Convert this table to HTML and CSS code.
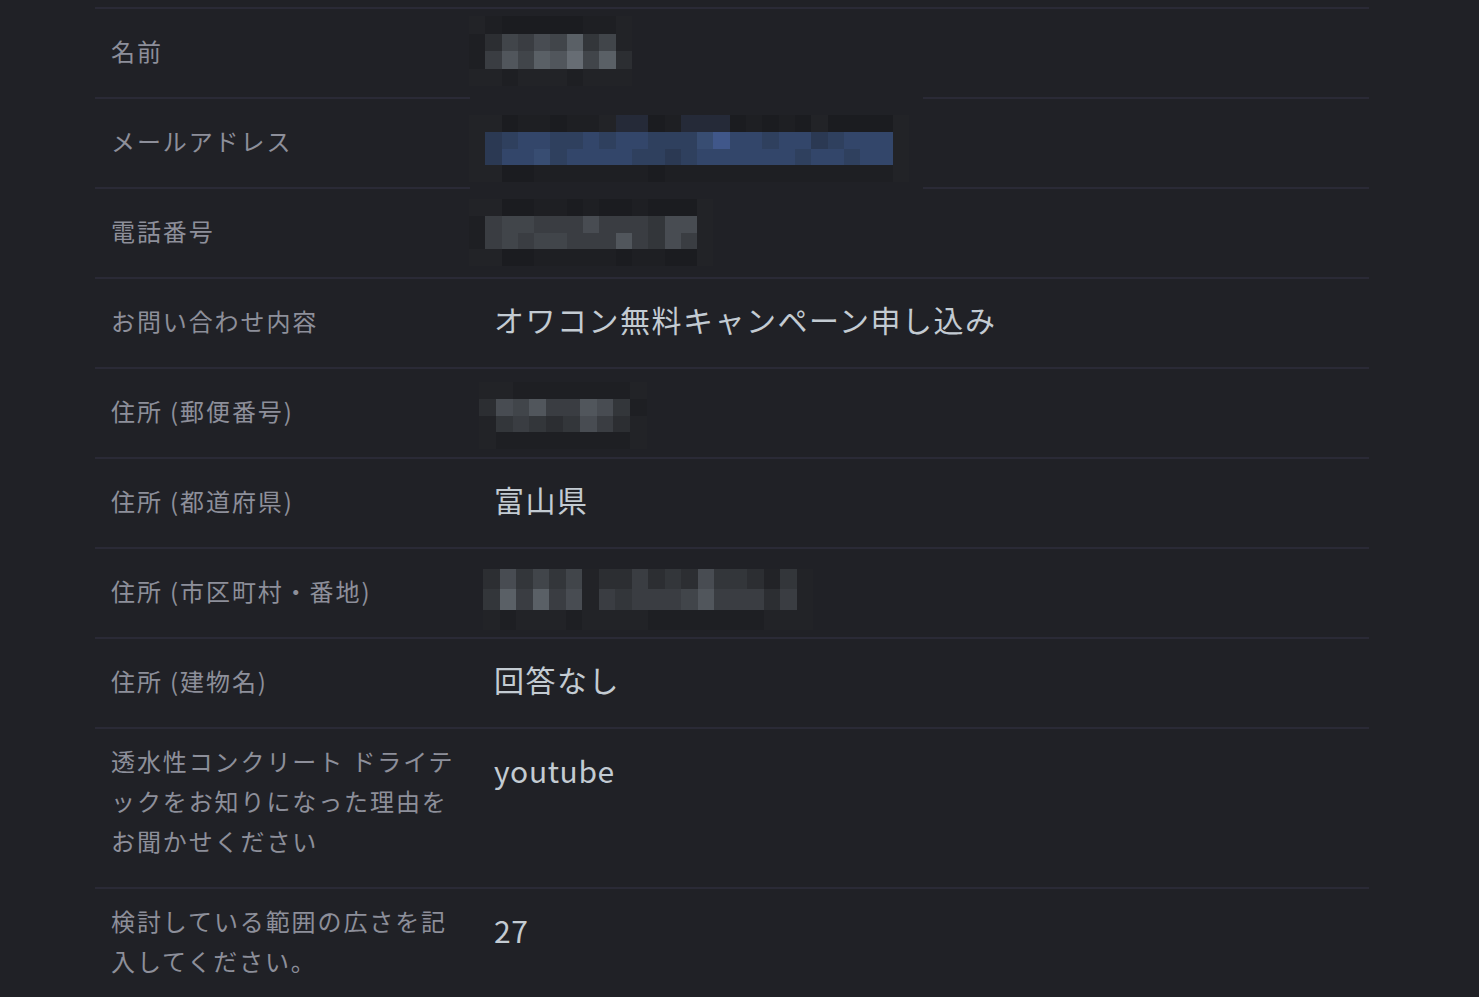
FILE: index.html
```html
<!DOCTYPE html>
<html lang="ja">
<head>
<meta charset="utf-8">
<title>お問い合わせ内容</title>
<link rel="stylesheet" href="styles.css">
</head>
<body>
<div class="table">
  <div class="row">
    <div class="label">名前</div>
    <div class="value"></div>
    <div class="mosaic m-name">
      <i class="h2"></i><i class="h1"></i><i class="h0"></i><i class="h0"></i><i class="h0"></i><i class="h0"></i><i class="h0"></i><i class="h1"></i><i class="h1"></i><i class="h2"></i>
      <i class="h1"></i><i class="g1"></i><i class="g4"></i><i class="g3"></i><i class="g5"></i><i class="g4"></i><i class="g7"></i><i class="g2"></i><i class="g4"></i><i class="h2"></i>
      <i class="h1"></i><i class="g3"></i><i class="g6"></i><i class="g4"></i><i class="g7"></i><i class="g6"></i><i class="g8"></i><i class="g4"></i><i class="g7"></i><i class="g1"></i>
      <i class="h2"></i><i class="h2"></i><i class="h1"></i><i class="h2"></i><i class="h2"></i><i class="h2"></i><i class="h1"></i><i class="h2"></i><i class="h2"></i><i class="h2"></i>
    </div>
  </div>
  <div class="row">
    <div class="label">メールアドレス</div>
    <div class="value"></div>
    <div class="mask m-mask"></div>
    <div class="mosaic m-email">
      <i class="h2"></i><i class="h2"></i><i class="h0"></i><i class="h1"></i><i class="h1"></i><i class="h0"></i><i class="h1"></i><i class="h1"></i><i class="h2"></i><i class="bh"></i><i class="bh"></i><i class="h0"></i><i class="h1"></i><i class="bh"></i><i class="bh"></i><i class="bh"></i><i class="h0"></i><i class="h1"></i><i class="h0"></i><i class="h1"></i><i class="h0"></i><i class="h2"></i><i class="h0"></i><i class="h0"></i><i class="h0"></i><i class="h0"></i><i class="h2"></i>
      <i class="h2"></i><i class="b1"></i><i class="b2"></i><i class="b3"></i><i class="b3"></i><i class="b2"></i><i class="b2"></i><i class="b3"></i><i class="b2"></i><i class="b3"></i><i class="b3"></i><i class="b2"></i><i class="b2"></i><i class="b2"></i><i class="b4"></i><i class="b5"></i><i class="b3"></i><i class="b3"></i><i class="b2"></i><i class="b3"></i><i class="b3"></i><i class="b1"></i><i class="b2"></i><i class="b3"></i><i class="b3"></i><i class="b3"></i><i class="h2"></i>
      <i class="h2"></i><i class="b1"></i><i class="b3"></i><i class="b3"></i><i class="b4"></i><i class="b2"></i><i class="b3"></i><i class="b3"></i><i class="b3"></i><i class="b3"></i><i class="b2"></i><i class="b2"></i><i class="b1"></i><i class="b2"></i><i class="b3"></i><i class="b3"></i><i class="b3"></i><i class="b3"></i><i class="b3"></i><i class="b3"></i><i class="b2"></i><i class="b3"></i><i class="b3"></i><i class="b2"></i><i class="b3"></i><i class="b3"></i><i class="h2"></i>
      <i class="h2"></i><i class="h2"></i><i class="h0"></i><i class="h0"></i><i class="h1"></i><i class="h1"></i><i class="h1"></i><i class="h1"></i><i class="h1"></i><i class="h1"></i><i class="h1"></i><i class="h0"></i><i class="h1"></i><i class="h1"></i><i class="h1"></i><i class="h1"></i><i class="h1"></i><i class="h1"></i><i class="h1"></i><i class="h1"></i><i class="h1"></i><i class="h1"></i><i class="h1"></i><i class="h1"></i><i class="h1"></i><i class="h1"></i><i class="h2"></i>
    </div>
  </div>
  <div class="row">
    <div class="label">電話番号</div>
    <div class="value"></div>
    <div class="mosaic m-phone">
      <i class="h2"></i><i class="h2"></i><i class="h0"></i><i class="h0"></i><i class="h1"></i><i class="h1"></i><i class="h0"></i><i class="h1"></i><i class="h0"></i><i class="h0"></i><i class="h1"></i><i class="h0"></i><i class="h0"></i><i class="h0"></i><i class="h2"></i>
      <i class="h1"></i><i class="g3"></i><i class="g4"></i><i class="g4"></i><i class="g3"></i><i class="g3"></i><i class="g3"></i><i class="g5"></i><i class="g3"></i><i class="g3"></i><i class="g3"></i><i class="g2"></i><i class="g5"></i><i class="g5"></i><i class="h2"></i>
      <i class="h1"></i><i class="g3"></i><i class="g4"></i><i class="g3"></i><i class="g4"></i><i class="g4"></i><i class="g3"></i><i class="g3"></i><i class="g3"></i><i class="g6"></i><i class="g3"></i><i class="g2"></i><i class="g5"></i><i class="g3"></i><i class="h2"></i>
      <i class="h2"></i><i class="h2"></i><i class="h0"></i><i class="h0"></i><i class="h1"></i><i class="h1"></i><i class="h1"></i><i class="h1"></i><i class="h1"></i><i class="h0"></i><i class="h1"></i><i class="h1"></i><i class="h0"></i><i class="h0"></i><i class="h2"></i>
    </div>
  </div>
  <div class="row">
    <div class="label">お問い合わせ内容</div>
    <div class="value">オワコン無料キャンペーン申し込み</div>
  </div>
  <div class="row">
    <div class="label">住所 (郵便番号)</div>
    <div class="value"></div>
    <div class="mosaic m-postal">
      <i class="h2"></i><i class="h2"></i><i class="h1"></i><i class="h1"></i><i class="h1"></i><i class="h1"></i><i class="h1"></i><i class="h1"></i><i class="h1"></i><i class="h2"></i>
      <i class="g1"></i><i class="g5"></i><i class="g4"></i><i class="g6"></i><i class="g3"></i><i class="g3"></i><i class="g6"></i><i class="g5"></i><i class="g2"></i><i class="h1"></i>
      <i class="h2"></i><i class="g2"></i><i class="g3"></i><i class="g2"></i><i class="g1"></i><i class="g2"></i><i class="g5"></i><i class="g3"></i><i class="g1"></i><i class="h2"></i>
      <i class="h2"></i><i class="h1"></i><i class="h1"></i><i class="h1"></i><i class="h1"></i><i class="h1"></i><i class="h1"></i><i class="h1"></i><i class="h1"></i><i class="h2"></i>
    </div>
  </div>
  <div class="row">
    <div class="label">住所 (都道府県)</div>
    <div class="value">富山県</div>
  </div>
  <div class="row">
    <div class="label">住所 (市区町村・番地)</div>
    <div class="value"></div>
    <div class="mosaic m-address">
      <i class="g1"></i><i class="g5"></i><i class="g2"></i><i class="g4"></i><i class="g2"></i><i class="g4"></i><i class="h2"></i><i class="g1"></i><i class="g1"></i><i class="g3"></i><i class="g1"></i><i class="g2"></i><i class="g1"></i><i class="g5"></i><i class="g2"></i><i class="g2"></i><i class="g1"></i><i class="h2"></i><i class="g2"></i><i class="h2"></i>
      <i class="g2"></i><i class="g7"></i><i class="g3"></i><i class="g7"></i><i class="g3"></i><i class="g5"></i><i class="h2"></i><i class="g3"></i><i class="g2"></i><i class="g3"></i><i class="g3"></i><i class="g3"></i><i class="g4"></i><i class="g6"></i><i class="g3"></i><i class="g3"></i><i class="g3"></i><i class="g1"></i><i class="g3"></i><i class="h2"></i>
      <i class="h2"></i><i class="h1"></i><i class="h2"></i><i class="h2"></i><i class="h2"></i><i class="h1"></i><i class="h2"></i><i class="h2"></i><i class="h2"></i><i class="h2"></i><i class="h1"></i><i class="h1"></i><i class="h1"></i><i class="h1"></i><i class="h1"></i><i class="h1"></i><i class="h1"></i><i class="h2"></i><i class="h2"></i><i class="h2"></i>
    </div>
  </div>
  <div class="row">
    <div class="label">住所 (建物名)</div>
    <div class="value">回答なし</div>
  </div>
  <div class="row tall">
    <div class="label">透水性コンクリート ドライテックをお知りになった理由をお聞かせください</div>
    <div class="value latin">youtube</div>
  </div>
  <div class="row tall">
    <div class="label">検討している範囲の広さを記入してください。</div>
    <div class="value latin">27</div>
  </div>
</div>
</body>
</html>
```

FILE: styles.css
```css
html, body {
  margin: 0;
  padding: 0;
  background: #202126;
  height: 100%;
  overflow: hidden;
}

body {
  font-family: "Noto Sans CJK JP", "Noto Sans", sans-serif;
}

.table {
  margin: 7px 0 0 95px;
  width: 1274px;
}

.row {
  position: relative;
  display: grid;
  grid-template-columns: 352px 1fr;
  column-gap: 31px;
  align-items: center;
  border-top: 2px solid #2a2a36;
  padding: 12px 16px 16px;
}

.row.tall {
  align-items: start;
  padding-bottom: 26px;
}

.label {
  font-size: 24px;
  line-height: 40px;
  letter-spacing: 1.9px;
  color: #8d8f9a;
  line-break: loose;
  word-break: break-all;
}

.value {
  font-size: 30px;
  line-height: 56px;
  padding-bottom: 4px;
  min-height: 56px;
  letter-spacing: 1.5px;
  color: #c3cbd2;
}

.value.latin {
  letter-spacing: 0.6px;
  line-height: 58px;
  padding-bottom: 2px;
}

.mask {
  position: absolute;
  z-index: 1;
  background: #202126;
}

.m-mask {
  left: 375px;
  top: -3px;
  width: 453px;
  height: 98px;
}

.mosaic {
  position: absolute;
  z-index: 2;
  display: grid;
}

.mosaic i {
  display: block;
}

.m-name {
  left: 374px;
  top: 7px;
  grid-template-columns: repeat(10, 16.3px);
  grid-auto-rows: 17.5px;
}

.m-email {
  left: 374px;
  top: 16px;
  grid-template-columns: repeat(27, 16.3px);
  grid-auto-rows: 16.75px;
}

.m-phone {
  left: 374px;
  top: 10px;
  grid-template-columns: repeat(15, 16.3px);
  grid-auto-rows: 16.8px;
}

.m-postal {
  left: 384px;
  top: 13px;
  grid-template-columns: repeat(10, 16.8px);
  grid-auto-rows: 16.8px;
}

.m-address {
  left: 388px;
  top: 20px;
  grid-template-columns: repeat(20, 16.5px);
  grid-auto-rows: 20.3px;
}

.h0 { background: #1b1c20; }
.h1 { background: #1e1f23; }
.h2 { background: #222327; }
.g1 { background: #2c2e32; }
.g2 { background: #33363a; }
.g3 { background: #3a3d42; }
.g4 { background: #41454a; }
.g5 { background: #484c52; }
.g6 { background: #51565c; }
.g7 { background: #5a6066; }
.g8 { background: #676d74; }
.bh { background: #252a38; }
.b1 { background: #2b3953; }
.b2 { background: #2f405e; }
.b3 { background: #33466a; }
.b4 { background: #384d72; }
.b5 { background: #40578a; }
```
